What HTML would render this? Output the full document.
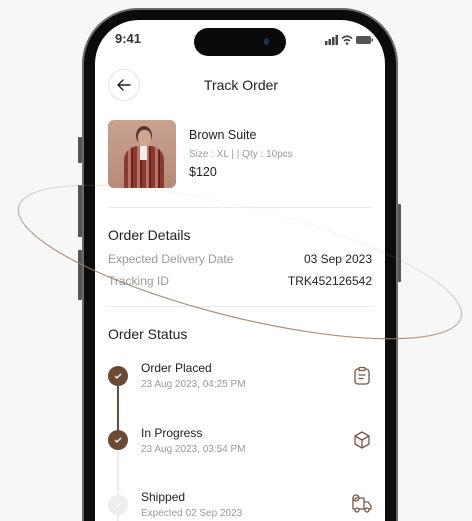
<!DOCTYPE html>
<html style="width:472px;height:521px;overflow:hidden"><head><meta charset="utf-8"><style>
*{margin:0;padding:0;box-sizing:border-box}
body{width:472px;height:521px;overflow:hidden;background:#f7f7f7;font-family:"Liberation Sans",sans-serif;position:relative;color:#222}
.frame{position:absolute;left:82px;top:8px;width:316px;height:513px;border-radius:56px 56px 0 0;background:#0b0b0b;border:2px solid #6a6a6a;border-bottom:none}
.screen{position:absolute;left:95px;top:20px;width:290px;height:501px;border-radius:44px 44px 0 0;background:#fff;overflow:hidden}
.btn{position:absolute;background:#555;width:4px;border-radius:1px}
.t{position:absolute;white-space:nowrap}
.g{color:#9a9a9a}
.hr{position:absolute;left:13px;width:264px;height:1px;background:#ececec}
.dot{position:absolute;width:20px;height:20px;border-radius:50%;background:#6b4a35;left:13px}
.dot svg{position:absolute;left:5px;top:5px}
</style></head><body>
<div class="btn" style="left:78px;top:137px;height:26px"></div>
<div class="btn" style="left:78px;top:185px;height:52px"></div>
<div class="btn" style="left:78px;top:250px;height:50px"></div>
<div class="btn" style="left:397px;top:204px;height:78px"></div>
<div class="frame"></div>
<div class="screen">
  <div class="t" style="left:20px;top:11px;font-size:13px;font-weight:bold;color:#333">9:41</div>
  <div style="position:absolute;left:99px;top:8px;width:92px;height:28px;border-radius:14px;background:#0a0a0a"></div>
  <div style="position:absolute;left:169px;top:18px;width:5px;height:7px;border-radius:3px;background:#1a3050"></div>
  <svg style="position:absolute;left:230px;top:14px" width="50" height="12">
    <rect x="0" y="7" width="2.5" height="4" fill="#444"/><rect x="3.5" y="5" width="2.5" height="6" fill="#444"/><rect x="7" y="3" width="2.5" height="8" fill="#444"/><rect x="10.5" y="1" width="2.5" height="10" fill="#444"/>
    <path d="M17 4.5 Q22 0 27 4.5 M19 7 Q22 4.5 25 7" stroke="#444" stroke-width="1.6" fill="none"/><circle cx="22" cy="9.5" r="1.3" fill="#444"/>
    <rect x="31" y="2" width="15" height="8" rx="2" fill="#555"/><rect x="46.5" y="4.5" width="1.5" height="3" fill="#555"/>
  </svg>
  <div style="position:absolute;left:13px;top:49px;width:32px;height:32px;border-radius:50%;border:1px solid #e3e3e3"></div>
  <svg style="position:absolute;left:21px;top:57px" width="16" height="16"><path d="M14 8H2M7 3L2 8l5 5" stroke="#222" stroke-width="1.4" fill="none" stroke-linecap="round" stroke-linejoin="round"/></svg>
  <div class="t" style="left:0;width:292px;text-align:center;top:57px;font-size:14px;color:#222">Track Order</div>
  <div style="position:absolute;left:13px;top:100px;width:68px;height:68px;border-radius:6px;background:linear-gradient(180deg,#c9a292,#b88a78);overflow:hidden">
    <div style="position:absolute;left:28px;top:6px;width:16px;height:19px;border-radius:50%;background:#5a3a2c"></div>
    <div style="position:absolute;left:30px;top:10px;width:13px;height:16px;border-radius:45%;background:#d2a58f"></div>
    <div style="position:absolute;left:16px;top:26px;width:40px;height:44px;border-radius:14px 14px 0 0;background:repeating-linear-gradient(90deg,#8a3a32 0 4px,#c07060 4px 7px,#5a2a26 7px 9px)"></div>
    <div style="position:absolute;left:32px;top:26px;width:7px;height:14px;background:#eee"></div>
  </div>
  <div class="t" style="left:94px;top:108px;font-size:12.5px">Brown Suite</div>
  <div class="t g" style="left:94px;top:129px;font-size:10px">Size : XL | | Qty : 10pcs</div>
  <div class="t" style="left:94px;top:145px;font-size:12.5px">$120</div>
  <div class="hr" style="top:187px"></div>
  <div class="t" style="left:13px;top:207px;font-size:14px">Order Details</div>
  <div class="t g" style="left:13px;top:232px;font-size:12px">Expected Delivery Date</div>
  <div class="t" style="right:13px;top:232px;font-size:12px">03 Sep 2023</div>
  <div class="t g" style="left:13px;top:254px;font-size:12px">Tracking ID</div>
  <div class="t" style="right:13px;top:254px;font-size:12px">TRK452126542</div>
  <div class="hr" style="top:286px"></div>
  <div class="t" style="left:13px;top:306px;font-size:14px">Order Status</div>
  <div style="position:absolute;left:22px;top:366px;width:2px;height:60px;background:#6b4a35"></div>
  <div style="position:absolute;left:22px;top:426px;width:2px;height:75px;background:#eee"></div>
  <div class="dot" style="top:346px"><svg width="10" height="10"><path d="M2 5l2 2 4-4" stroke="#fff" stroke-width="1.3" fill="none"/></svg></div>
  <div class="dot" style="top:410px"><svg width="10" height="10"><path d="M2 5l2 2 4-4" stroke="#fff" stroke-width="1.3" fill="none"/></svg></div>
  <div class="dot" style="top:475px;background:#ededed"><svg width="10" height="10"><path d="M2 5l2 2 4-4" stroke="#fff" stroke-width="1.3" fill="none"/></svg></div>
  <div class="t" style="left:46px;top:341px;font-size:12px">Order Placed</div>
  <div class="t g" style="left:46px;top:359px;font-size:10px">23 Aug 2023, 04:25 PM</div>
  <div class="t" style="left:46px;top:406px;font-size:12px">In Progress</div>
  <div class="t g" style="left:46px;top:424px;font-size:10px">23 Aug 2023, 03:54 PM</div>
  <div class="t" style="left:46px;top:470px;font-size:12px">Shipped</div>
  <div class="t g" style="left:46px;top:488px;font-size:10px">Expected 02 Sep 2023</div>
  <svg style="position:absolute;left:257px;top:346px" width="20" height="20" fill="none" stroke="#7a5640" stroke-width="1.3" stroke-linecap="round"><rect x="3" y="3" width="14" height="15" rx="3"/><rect x="7" y="1.5" width="6" height="3" rx="1" fill="#fff"/><path d="M7 9h6M7 12.5h4"/></svg>
  <svg style="position:absolute;left:257px;top:410px" width="20" height="20" fill="none" stroke="#7a5640" stroke-width="1.3" stroke-linejoin="round"><path d="M10 2l7 4v8l-7 4-7-4V6z M3 6l7 4 7-4 M10 10v8"/></svg>
  <svg style="position:absolute;left:256px;top:474px" width="22" height="20" fill="none" stroke="#7a5640" stroke-width="1.3" stroke-linejoin="round"><path d="M2 4h11v11H2z M13 8h4l3 4v3h-7"/><circle cx="6" cy="16" r="2" fill="#fff"/><circle cx="16" cy="16" r="2" fill="#fff"/><circle cx="5" cy="4" r="3" fill="#fff"/><path d="M3.7 4l1 1 2-2"/></svg>
</div>
<svg style="position:absolute;left:0;top:0" width="472" height="521">
  <defs><linearGradient id="gr" gradientUnits="userSpaceOnUse" x1="0" y1="200" x2="0" y2="300"><stop offset="0" stop-color="#a48a78" stop-opacity="0"/><stop offset="0.3" stop-color="#a48a78" stop-opacity="0.25"/><stop offset="1" stop-color="#9a7d68" stop-opacity="0.85"/></linearGradient></defs>
  <ellipse cx="240" cy="262" rx="228" ry="55" transform="rotate(14 240 262)" fill="none" stroke="url(#gr)" stroke-width="1.2"/>
</svg>
</body></html>
